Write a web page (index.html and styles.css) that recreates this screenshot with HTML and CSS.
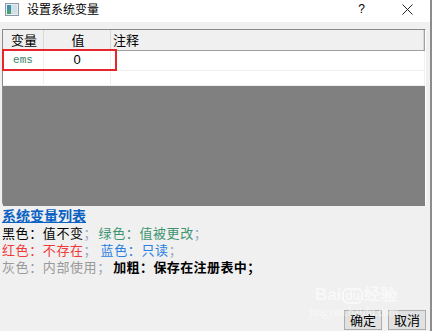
FILE: index.html
```html
<!DOCTYPE html>
<html>
<head>
<title>设置系统变量</title>
<meta http-equiv="Content-Type" content="text/html; charset=utf-8">
<link rel="stylesheet" href="styles.css">
</head>
<body>
<div class="win">
	<div class="titlebar">
		<svg class="ico" width="14" height="13" viewBox="0 0 14 13">
			<rect x="0.5" y="0.5" width="13" height="12" fill="#e8eef2" stroke="#8a9aa6"/>
			<rect x="2" y="2" width="4" height="9" fill="#3f8fb0"/>
			<rect x="6" y="2" width="6" height="9" fill="#cfe0e6"/>
			<rect x="2" y="7" width="4" height="4" fill="#4aa070"/>
		</svg>
		<span class="wtitle">设置系统变量</span>
		<span class="help">?</span>
		<svg class="close" width="11" height="11" viewBox="0 0 11 11"><path d="M0.5 0.5L10.5 10.5M10.5 0.5L0.5 10.5" stroke="#222" stroke-width="1"/></svg>
	</div>
	<div class="main">
		<div class="grid">
			<div class="row head">
				<div class="c1">变量</div>
				<div class="c2">值</div>
				<div class="c3">注释</div>
			</div>
			<div class="row r1">
				<div class="c1 vname">ems</div>
				<div class="c2 val">0</div>
				<div class="c3"></div>
			</div>
			<div class="row r2">
				<div class="c1"></div>
				<div class="c2"></div>
				<div class="c3"></div>
			</div>
			<div class="empty"></div>
			<div class="mark"></div>
		</div>
		<div class="legend">
			<div class="ltit">系统变量列表</div>
			<div class="line"><span>黑色：值不变</span><span class="sc w1">；</span><span class="green">绿色：值被更改</span><span class="sc">；</span></div>
			<div class="line"><span class="red">红色：不存在</span><span class="sc w2">；</span><span class="blue">蓝色：只读</span><span class="sc">；</span></div>
			<div class="line"><span class="grey">灰色：内部使用</span><span class="sc w3">；</span><b>加粗：保存在注册表中；</b></div>
		</div>
		<div class="btns">
			<span class="btn">确定</span>
			<span class="btn">取消</span>
		</div>
		<div class="wm">
			<div class="wm1">Bai<span class="du">du</span>经验</div>
			<div class="wm2">jingyan.baidu.com</div>
		</div>
	</div>
</div>
</body>
</html>
```
FILE: styles.css
```css
html, body {
	margin: 0;
	padding: 0;
	background: #f0f0f0;
}
body {
	font-family: "Noto Sans CJK SC", "Liberation Sans", sans-serif;
	font-size: 13px;
	color: #000;
}
.win {
	width: 430px;
	height: 331px;
	border-right: 2px solid #8c8c8c;
	background: #f0f0f0;
	overflow: hidden;
}
.titlebar {
	height: 22px;
	background: #fff;
	display: flex;
	align-items: center;
	padding-left: 5px;
}
.ico {
	margin-top: -3px;
}
.wtitle {
	margin-left: 8px;
	font-size: 12px;
	line-height: 14px;
	margin-top: -4px;
	color: #000;
}
.help {
	margin-left: auto;
	font-family: "Liberation Sans", sans-serif;
	font-size: 12px;
	margin-top: -4px;
}
.close {
	margin-left: 37px;
	margin-right: 17px;
	margin-top: -3px;
}
.main {
	position: relative;
	height: 309px;
	padding-top: 7px;
	box-sizing: border-box;
}
.grid {
	position: relative;
	margin-left: 2px;
	width: 424px;
	height: 176px;
	border-top: 1px solid #8a8a8a;
	border-left: 1px solid #8a8a8a;
	border-right: 1px solid #fff;
	border-bottom: 2px solid #fff;
	box-sizing: border-box;
}
.row {
	display: flex;
	background: #fff;
}
.row > div {
	box-sizing: border-box;
	border-right: 1px solid #f0f0f0;
}
.c1 {
	width: 41px;
}
.c2 {
	width: 67px;
}
.c3 {
	flex: 1;
}
.head {
	height: 20px;
	background: #f0f0f0;
	border-bottom: 1px solid #a0a0a0;
	border-right: 1px solid #a0a0a0;
	line-height: 19px;
}
.head > div {
	border-right: 1px solid #d8d8d8;
	padding-left: 2px;
}
.head .c1 {
	text-align: center;
}
.head .c2 {
	text-align: center;
}
.r1 {
	height: 19px;
	border-bottom: 1px solid #f0f0f0;
	line-height: 18px;
}
.r2 {
	height: 14px;
}
.vname {
	font-family: "Liberation Mono", monospace;
	font-size: 11px;
	color: #3a8468;
	text-align: center;
}
.val {
	font-family: "Liberation Sans", sans-serif;
	font-size: 13px;
	text-align: center;
}
.empty {
	background: #808080;
	height: 120px;
	margin-top: 1px;
}
.mark {
	position: absolute;
	left: -1px;
	top: 19px;
	width: 115px;
	height: 22px;
	border: 2px solid #e8252b;
	box-sizing: border-box;
}
.legend {
	padding-left: 2px;
	margin-top: 2px;
	line-height: 17px;
	letter-spacing: 0.6px;
}
.ltit {
	color: #0a62c4;
	font-weight: bold;
	text-decoration: underline;
	font-size: 14px;
	letter-spacing: 0;
}
.line {
	display: flex;
	white-space: nowrap;
}
.sc {
	color: #9aa8c0;
}
.w1 {
	width: 15px;
}
.w2 {
	width: 17px;
}
.w3 {
	width: 16px;
}
.green {
	color: #3f9470;
}
.red {
	color: #f03a3a;
}
.blue {
	color: #2a7fe0;
}
.grey {
	color: #999;
}
.line b {
	letter-spacing: 0.4px;
}
.btns {
	position: absolute;
	right: 4px;
	bottom: 1px;
	display: flex;
	gap: 6px;
}
.btn {
	display: block;
	width: 38px;
	height: 20px;
	line-height: 18px;
	text-align: center;
	border: 1px solid #adadad;
	background: #e1e1e1;
	box-sizing: border-box;
	font-size: 13px;
}
.wm {
	position: absolute;
	left: 315px;
	top: 263px;
	color: rgba(255, 255, 255, 0.6);
	pointer-events: none;
}
.wm1 {
	font-family: "Liberation Sans", sans-serif;
	font-size: 17px;
	font-weight: bold;
	line-height: 20px;
}
.du {
	display: inline-block;
	border: 2px solid rgba(255, 255, 255, 0.6);
	border-radius: 6px;
	font-size: 12px;
	line-height: 12px;
	padding: 0 1px;
	margin: 0 1px;
}
.wm2 {
	font-family: "Liberation Serif", serif;
	font-size: 12px;
	margin-left: -6px;
}
```
